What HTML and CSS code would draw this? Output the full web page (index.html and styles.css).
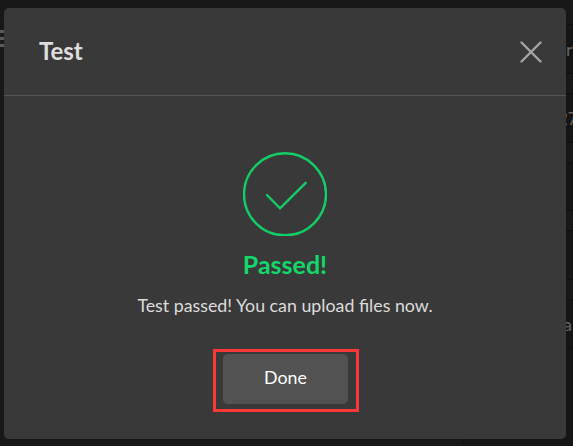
FILE: index.html
```
<!DOCTYPE html>
<html lang="en">
<head>
    <meta charset="UTF-8">
    <meta name="viewport" content="width=device-width, initial-scale=1.0">
    <title>Test</title>
    <link rel="stylesheet" href="styles.css">
</head>
<body>
    <div class="page">
        <div class="sidebar">
            <div class="menu-icon"><span></span><span></span><span></span></div>
        </div>
        <div class="fields">
            <div class="gap first"></div>
            <div class="field">r</div>
            <div class="gap"></div>
            <div class="field"><span class="port">27</span></div>
            <div class="gap"></div>
            <div class="field"></div>
            <div class="gap"></div>
            <div class="field"></div>
            <div class="gap"></div>
            <div class="field"><span class="user">a</span></div>
            <div class="gap last"></div>
        </div>
    </div>

    <div class="modal">
        <div class="modal-header">
            <h1>Test</h1>
            <svg class="close" viewBox="0 0 24 24" width="24" height="24">
                <path d="M2.5 2.5 L21.5 21.5 M21.5 2.5 L2.5 21.5" />
            </svg>
        </div>
        <div class="modal-body">
            <svg class="check" viewBox="0 0 84 84" width="84" height="84">
                <circle cx="42" cy="42.3" r="41" />
                <path d="M24 43 L37 56.3 L62.7 30.8" />
            </svg>
            <h2>Passed!</h2>
            <p>Test passed! You can upload files now.</p>
            <div class="highlight">
                <button>Done</button>
            </div>
        </div>
    </div>
</body>
</html>
```

FILE: styles.css
```
* {
    box-sizing: border-box;
}

body {
    margin: 0;
    height: 446px;
    overflow: hidden;
    background-color: #181818;
    font-family: Lato, "Liberation Sans", sans-serif;
}

/* dimmed page behind the dialog */
.page {
    display: flex;
    justify-content: space-between;
    height: 446px;
}

.sidebar {
    padding-top: 30px;
}

.menu-icon {
    display: flex;
    flex-direction: column;
    gap: 4px;
    width: 4px;
    border-left: 1px solid #351818;
}

.menu-icon span {
    height: 3px;
    margin-left: -1px;
    background: #5a5a5a;
}

.fields {
    width: 111px;
}

.field {
    height: 47.75px;
    padding-left: 104px;
    background: #151515;
    color: #666;
    font-size: 18px;
    line-height: 49px;
    white-space: nowrap;
}

.gap {
    height: 21px;
    border-top: 1px solid #101010;
    border-bottom: 1px solid #101010;
}

.gap.first {
    height: 25px;
    border-top: none;
}

.gap.last {
    height: 98px;
    border-left: 1px solid #101010;
    border-bottom: none;
    background: #151515;
}

.port {
    margin-left: -8px;
    font-size: 17px;
}

.user {
    margin-left: -3px;
}

.modal {
    position: absolute;
    top: 8px;
    left: 4px;
    width: 562px;
    height: 431px;
    background: #393939;
    border-radius: 5px;
}

.modal-header {
    display: flex;
    justify-content: space-between;
    align-items: center;
    height: 88px;
    padding: 0 23px 0 35px;
    border-bottom: 1px solid #555;
}

h1 {
    margin: 0 0 1px;
    font-size: 24px;
    line-height: 28px;
    color: #dedede;
}

.close {
    fill: none;
    stroke: #a5a5a5;
    stroke-width: 2.4;
    stroke-linecap: round;
}

.modal-body {
    display: flex;
    flex-direction: column;
    align-items: center;
    padding-top: 56px;
}

.check {
    fill: none;
    stroke: #12ce66;
    stroke-width: 2.4;
    stroke-linecap: round;
}

h2 {
    margin: 12px 0 0;
    font-size: 25px;
    line-height: 32px;
    color: #13d76b;
}

p {
    margin: 13px 0 0;
    font-size: 17.8px;
    line-height: 24px;
    color: #dcdcdc;
}

.highlight {
    margin: 32px 0 0 2px;
    width: 146px;
    height: 63px;
    padding: 2px 7px;
    border: 3px solid #fb3838;
}

button {
    display: block;
    width: 125px;
    height: 50px;
    padding: 0 0 4px;
    border: none;
    border-radius: 5px;
    background: #525252;
    color: #fff;
    font-family: inherit;
    font-size: 17.8px;
}
```
